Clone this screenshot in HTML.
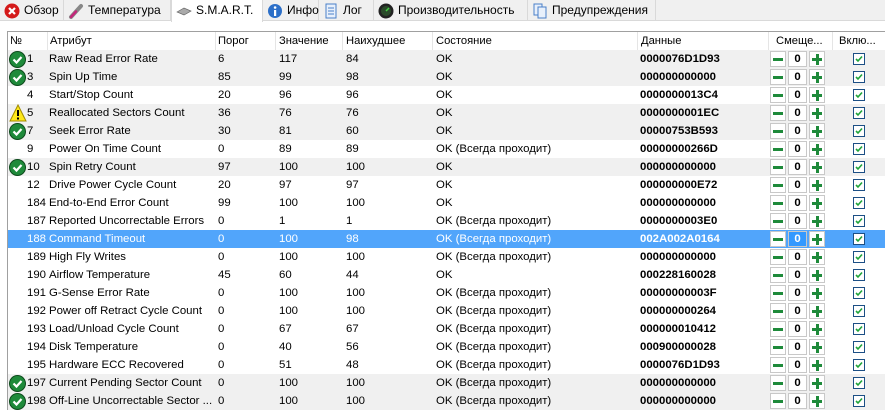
<!DOCTYPE html><html><head><meta charset="utf-8"><style>
*{margin:0;padding:0;box-sizing:border-box}
body{width:885px;height:410px;overflow:hidden;background:#fff;font-family:"Liberation Sans","DejaVu Sans",sans-serif;font-size:11.4px;color:#000;position:relative}
.tabs{position:absolute;left:0;top:0;width:885px;height:21px;background:#f0f0f0;border-bottom:1px solid #d9d9d9}
.tab{position:absolute;top:0;height:21px;border-right:1px solid #d9d9d9;line-height:21px;padding-left:24px;font-size:12px}
.tab.act{background:#fff;height:22px;border-left:1px solid #d9d9d9}
.ic{position:absolute;left:4px;top:3px;width:16px;height:16px}
.grid{position:absolute;left:7px;top:31px;width:878px;height:379px;border-left:1px solid #a0a0a0;border-top:1px solid #a0a0a0}
.hdr{position:absolute;top:32px;height:18px;line-height:18px;font-size:11.2px}
.sep{position:absolute;top:32px;width:1px;height:18px;background:#e5e5e5}
.row{position:absolute;left:8px;width:877px;height:18px;line-height:18px}
.row.g{background:#f0f0f0}
.row.sel{background:#51a5fb;color:#fff}
.row span{position:absolute;top:0;white-space:nowrap}
.b{font-weight:bold}
.btn{position:absolute;top:1px;height:16px;border:1px solid #c8c8c8;background:#fff}
.mn{left:762px;width:16px}
.mn:after{content:"";position:absolute;left:2px;top:6px;width:10px;height:3px;background:#1e8a3a}
.zv{left:780px;width:19px;text-align:center;line-height:14px;font-weight:bold;color:#000}
.pl{left:801px;width:16px}
.pl:before{content:"";position:absolute;left:2px;top:6px;width:10px;height:3px;background:#1e8a3a}
.pl:after{content:"";position:absolute;left:5.5px;top:2px;width:3px;height:11px;background:#1e8a3a}
.cb{position:absolute;left:845px;top:3px;width:12px;height:12px;border:1px solid #1c4f85;background:#fff}
</style></head><body>
<div class="tabs">
<div class="tab" style="left:0;width:64px"><svg class="ic" viewBox="0 0 16 16"><circle cx="8" cy="8" r="7.5" fill="#d41a1a"/><path d="M5 5l6 6M11 5l-6 6" stroke="#fff" stroke-width="2.2"/></svg>Обзор</div>
<div class="tab" style="left:64px;width:107px"><svg class="ic" viewBox="0 0 16 16"><path d="M3 14L13 3" stroke="#888" stroke-width="4" stroke-linecap="round"/><path d="M3 14L8 8.5" stroke="#c4267a" stroke-width="2.5" stroke-linecap="round"/></svg>Температура</div>
<div class="tab act" style="left:171px;width:92px"><svg class="ic" viewBox="0 0 16 16"><path d="M1 9l7-4 7 3-7 4z" fill="#aaa" stroke="#666" stroke-width=".7"/></svg>S.M.A.R.T.</div>
<div class="tab" style="left:263px;width:56px"><svg class="ic" viewBox="0 0 16 16"><circle cx="8" cy="8" r="7" fill="#2c6fc8"/><rect x="7" y="7" width="2.2" height="6" fill="#fff"/><circle cx="8.1" cy="4.5" r="1.3" fill="#fff"/></svg>Инфо</div>
<div class="tab" style="left:319px;width:55px"><svg class="ic" viewBox="0 0 16 16"><rect x="3" y="1" width="10" height="14" fill="#e8f0fb" stroke="#4a7fc8"/><path d="M5 5h6M5 8h6M5 11h6" stroke="#4a7fc8"/></svg>Лог</div>
<div class="tab" style="left:374px;width:154px"><svg class="ic" viewBox="0 0 16 16"><circle cx="8" cy="8" r="7.5" fill="#222"/><circle cx="8" cy="8" r="5" fill="#2a4a2a"/><path d="M8 8l3-3" stroke="#4c4" stroke-width="1.5"/></svg>Производительность</div>
<div class="tab" style="left:528px;width:128px"><svg class="ic" viewBox="0 0 16 16"><rect x="2" y="1" width="8" height="11" fill="#e8f0fb" stroke="#4a7fc8"/><rect x="6" y="4" width="8" height="11" fill="#e8f0fb" stroke="#4a7fc8"/></svg>Предупреждения</div>
</div>
<div class="grid"></div>
<div class="hdr" style="left:10px">№</div>
<div class="hdr" style="left:50px">Атрибут</div>
<div class="hdr" style="left:218px">Порог</div>
<div class="hdr" style="left:279px">Значение</div>
<div class="hdr" style="left:346px">Наихудшее</div>
<div class="hdr" style="left:436px">Состояние</div>
<div class="hdr" style="left:641px">Данные</div>
<div class="hdr" style="left:776px">Смеще...</div>
<div class="hdr" style="left:839px">Вклю...</div>
<div class="sep" style="left:47px"></div><div class="sep" style="left:215px"></div><div class="sep" style="left:275px"></div><div class="sep" style="left:342px"></div><div class="sep" style="left:432px"></div><div class="sep" style="left:637px"></div><div class="sep" style="left:768px"></div><div class="sep" style="left:832px"></div>
<div id="rows"></div>
<script>
var d=[["ok","1","Raw Read Error Rate","6","117","84","OK","0000076D1D93"],
["ok","3","Spin Up Time","85","99","98","OK","000000000000"],
["","4","Start/Stop Count","20","96","96","OK","0000000013C4"],
["w","5","Reallocated Sectors Count","36","76","76","OK","0000000001EC"],
["ok","7","Seek Error Rate","30","81","60","OK","00000753B593"],
["","9","Power On Time Count","0","89","89","OK (Всегда проходит)","00000000266D"],
["ok","10","Spin Retry Count","97","100","100","OK","000000000000"],
["","12","Drive Power Cycle Count","20","97","97","OK","000000000E72"],
["","184","End-to-End Error Count","99","100","100","OK","000000000000"],
["","187","Reported Uncorrectable Errors","0","1","1","OK (Всегда проходит)","0000000003E0"],
["s","188","Command Timeout","0","100","98","OK (Всегда проходит)","002A002A0164"],
["","189","High Fly Writes","0","100","100","OK (Всегда проходит)","000000000000"],
["","190","Airflow Temperature","45","60","44","OK","000228160028"],
["","191","G-Sense Error Rate","0","100","100","OK (Всегда проходит)","00000000003F"],
["","192","Power off Retract Cycle Count","0","100","100","OK (Всегда проходит)","000000000264"],
["","193","Load/Unload Cycle Count","0","67","67","OK (Всегда проходит)","000000010412"],
["","194","Disk Temperature","0","40","56","OK (Всегда проходит)","000900000028"],
["","195","Hardware ECC Recovered","0","51","48","OK (Всегда проходит)","0000076D1D93"],
["ok","197","Current Pending Sector Count","0","100","100","OK (Всегда проходит)","000000000000"],
["ok","198","Off-Line Uncorrectable Sector ...","0","100","100","OK (Всегда проходит)","000000000000"]];
var h="";
d.forEach(function(r,i){
var c=r[0]=="s"?"row sel":(r[0]=="ok"||r[0]=="w")?"row g":"row";
var ic="";
if(r[0]=="ok")ic='<svg style="position:absolute;left:1px;top:1px" width="17" height="17" viewBox="0 0 17 17"><circle cx="8.5" cy="8.5" r="8" fill="#1e8a3a" stroke="#0d4a1c"/><path d="M4.5 8.5l3 3 5-5.5" stroke="#fff" stroke-width="2.2" fill="none"/></svg>';
if(r[0]=="w")ic='<svg style="position:absolute;left:1px;top:0" width="18" height="18" viewBox="0 0 18 18"><path d="M9 1L17 17H1z" fill="#ffe81a" stroke="#a08a00"/><rect x="8" y="6" width="2" height="6" fill="#000"/><rect x="8" y="13.5" width="2" height="2" fill="#000"/></svg>';
h+='<div class="'+c+'" style="top:'+(50+i*18)+'px">'+ic+'<span style="left:19px">'+r[1]+'</span><span style="left:41px">'+r[2]+'</span><span style="left:210px">'+r[3]+'</span><span style="left:271px">'+r[4]+'</span><span style="left:338px">'+r[5]+'</span><span style="left:428px">'+r[6]+'</span><span class="b" style="left:632px">'+r[7]+'</span><div class="btn mn"></div><div class="btn zv"'+(r[0]=="s"?' style="background:#3399ff;color:#fff"':'')+'>0</div><div class="btn pl"></div><div class="cb"><svg width="10" height="10" viewBox="0 0 10 10" style="position:absolute;left:0;top:0"><path d="M2 5l2 2 4-4.5" stroke="#1fa33a" stroke-width="1.6" fill="none"/></svg></div></div>';
});
document.getElementById("rows").innerHTML=h;
</script>
</body></html>
